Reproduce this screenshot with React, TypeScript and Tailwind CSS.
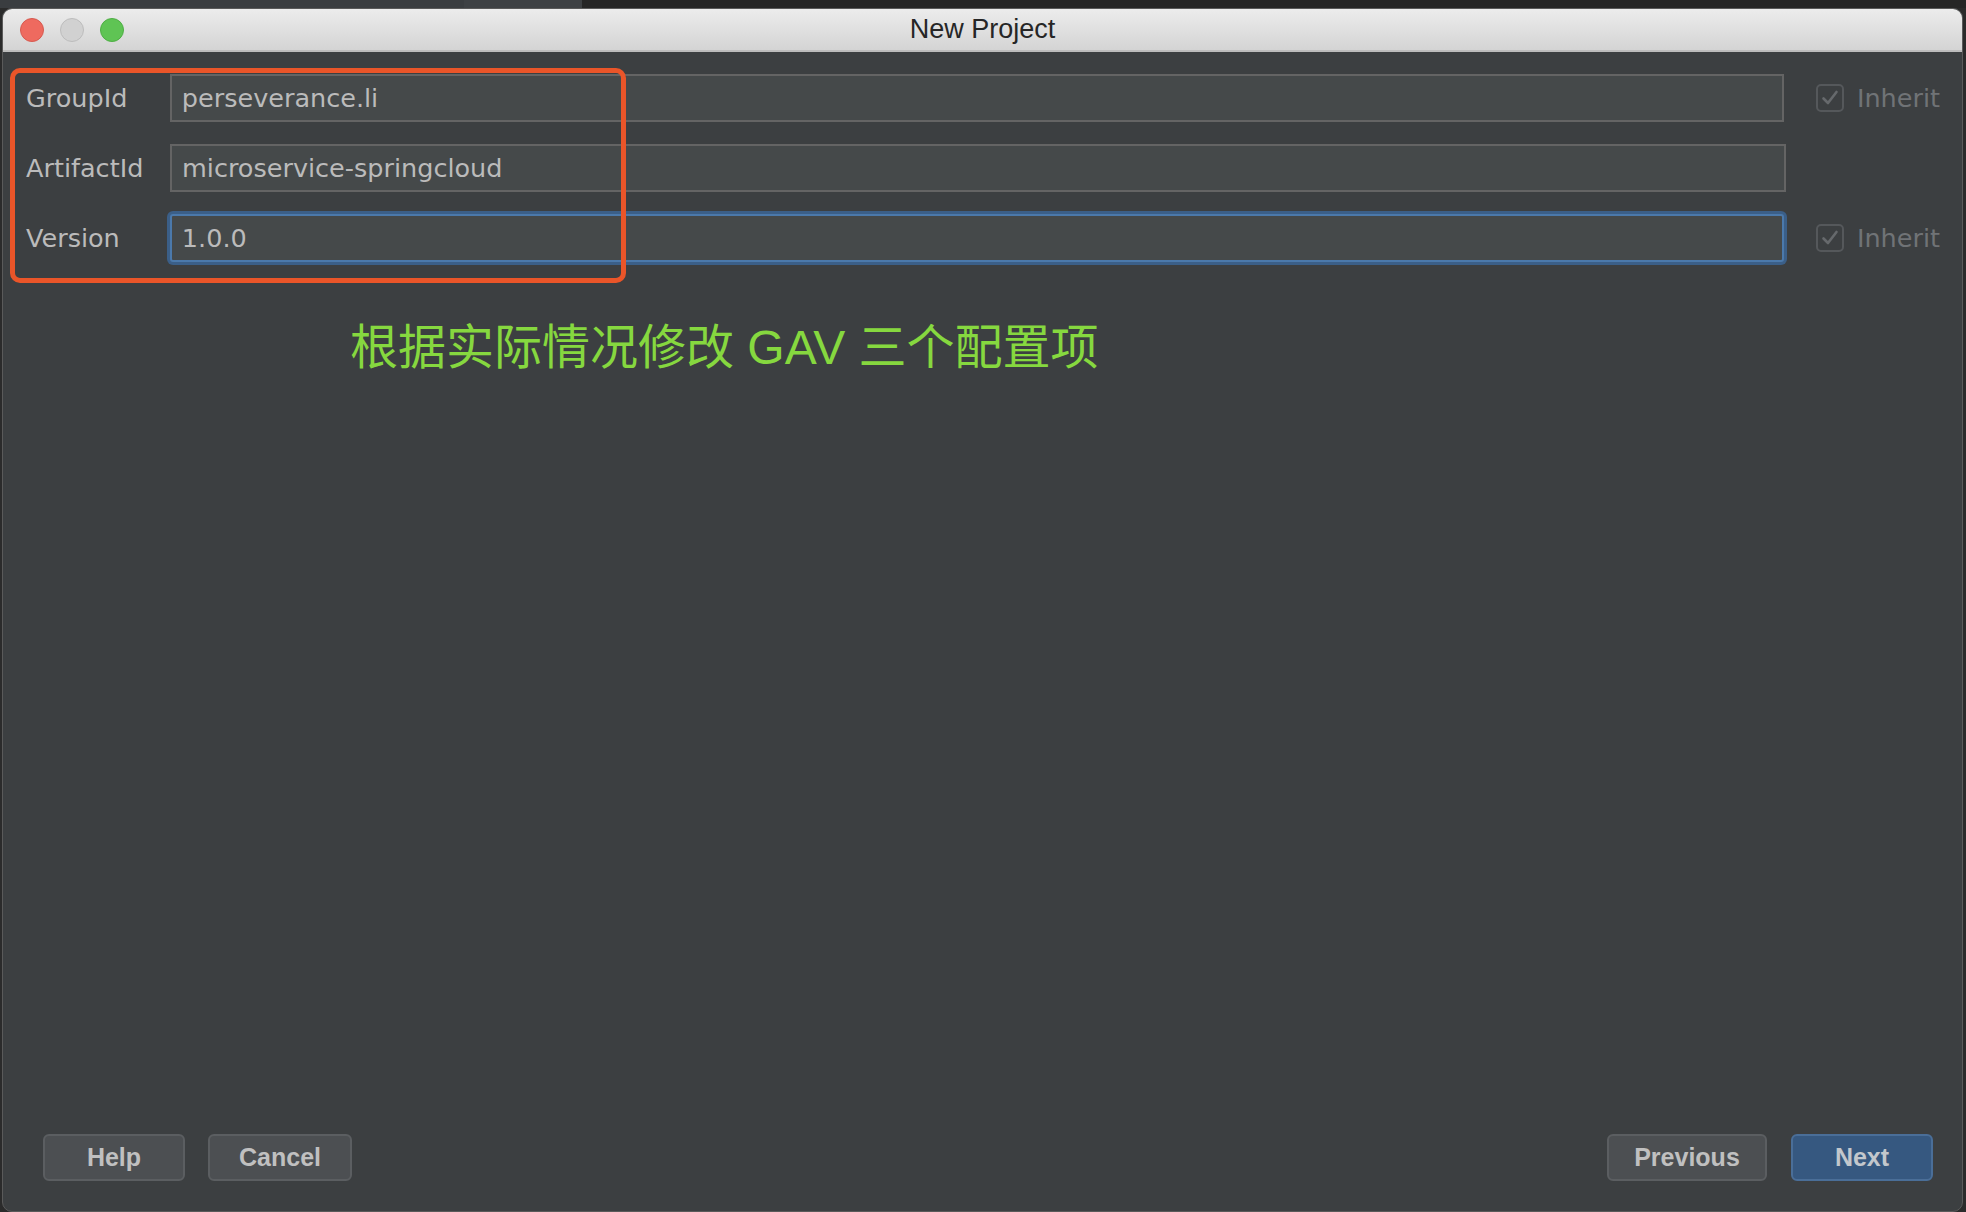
import React from "react";

const labelFont = { fontFamily: '"DejaVu Sans", "Liberation Sans", sans-serif' };
const sysFont = { fontFamily: '"Liberation Sans", Arial, sans-serif' };

const rows = [
  { label: "GroupId", value: "perseverance.li", inherit: true, focused: false },
  { label: "ArtifactId", value: "microservice-springcloud", inherit: false, focused: false },
  { label: "Version", value: "1.0.0", inherit: true, focused: true },
];

const CheckBox = () => (
  <div className="w-[28px] h-[28px] rounded-[5px] border-[2px] border-[#55585b] flex items-center justify-center">
    <svg width="20" height="20" viewBox="0 0 20 20" fill="none">
      <path d="M3.5 10.5 L8 15 L16.5 4" stroke="#66696c" strokeWidth="2.6" strokeLinecap="round" strokeLinejoin="round" />
    </svg>
  </div>
);

const DialogButton = ({ label, primary }: { label: string; primary?: boolean }) => (
  <button
    className={
      "h-[47px] rounded-[6px] border-[2px] text-[25px] font-bold " +
      (primary
        ? "bg-[#365880] border-[#4a6e98] text-[#c3c7cc]"
        : "bg-[#4c4f52] border-[#5b5e61] text-[#c0c0c0]")
    }
    style={sysFont}
  >
    {label}
  </button>
);

const App = () => {
  return (
    <div className="w-[1966px] h-[1212px] bg-[#2b2b2b] overflow-hidden relative">
      {/* strip of the window behind */}
      <div className="flex h-[8px]">
        <div className="w-[464px] bg-[#3a3d40]" />
        <div className="w-[118px] bg-[#3e4144]" />
        <div className="flex-1 bg-[#262626]" />
      </div>

      <div className="ml-[2px] w-[1961px] h-[1204px] rounded-[10px] border border-[#5a5a5a] bg-[#3c3f41] flex flex-col overflow-hidden">
        {/* title bar */}
        <div className="h-[43px] shrink-0 relative flex items-center justify-center bg-gradient-to-b from-[#ececec] to-[#d4d4d4] border-b-[2px] border-[#bcbcbc]">
          <div className="absolute left-[17px] top-[9px] flex gap-[16px]">
            <div className="w-[24px] h-[24px] rounded-full bg-[#ee6a5f] border border-[#d65a50]" />
            <div className="w-[24px] h-[24px] rounded-full bg-[#d1d1d1] border border-[#bcbcbc]" />
            <div className="w-[24px] h-[24px] rounded-full bg-[#5fc454] border border-[#4fae45]" />
          </div>
          <span className="text-[27px] text-[#262626] leading-none" style={sysFont}>
            New Project
          </span>
        </div>

        {/* content */}
        <div className="flex-1 flex flex-col relative pl-[23px] pr-[22px] pt-[22px] pb-[30px]">
          <div className="flex flex-col gap-[22px]">
            {rows.map((r) => (
              <div key={r.label} className="flex items-center h-[48px]">
                <div className="w-[144px] text-[25.5px] text-[#bbbbbb]" style={labelFont}>
                  {r.label}
                </div>
                <div
                  className={
                    "w-[1616px] h-[48px] flex items-center pl-[10px] bg-[#45494a] text-[25.5px] text-[#bbbbbb] " +
                    (r.focused
                      ? "border-[2px] border-[#4b79ab] rounded-[3px] shadow-[0_0_0_3px_#3b5f88]"
                      : "border-[2px] border-[#646464]")
                  }
                  style={labelFont}
                >
                  {r.value}
                </div>
                {r.inherit && (
                  <div className="flex items-center ml-[32px] gap-[13px]">
                    <CheckBox />
                    <span className="text-[25.5px] text-[#707376]" style={labelFont}>
                      Inherit
                    </span>
                  </div>
                )}
              </div>
            ))}
          </div>

          <div
            className="mt-[56px] ml-[324px] text-[48px] leading-[60px] text-[#86d83f]"
            style={{ fontFamily: '"Liberation Sans", "Noto Sans CJK SC", sans-serif' }}
          >
            根据实际情况修改 GAV 三个配置项
          </div>

          {/* annotation box */}
          <div className="absolute left-[7px] top-[16px] w-[616px] h-[215px] rounded-[10px] border-[5px] border-[#ea5529]" />

          <div className="mt-auto flex items-center">
            <div className="ml-[17px] flex gap-[23px]">
              <div className="w-[142px] flex flex-col">
                <DialogButton label="Help" />
              </div>
              <div className="w-[144px] flex flex-col">
                <DialogButton label="Cancel" />
              </div>
            </div>
            <div className="ml-auto mr-[7px] flex gap-[24px]">
              <div className="w-[160px] flex flex-col">
                <DialogButton label="Previous" />
              </div>
              <div className="w-[142px] flex flex-col">
                <DialogButton label="Next" primary />
              </div>
            </div>
          </div>
        </div>
      </div>
    </div>
  );
};

export default App;
